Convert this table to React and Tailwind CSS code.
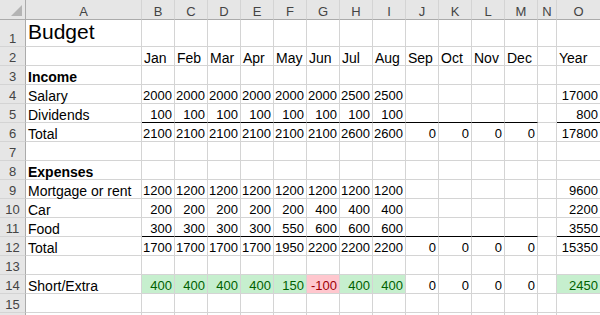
import React from "react";

const months = ["Jan", "Feb", "Mar", "Apr", "May", "Jun", "Jul", "Aug", "Sep", "Oct", "Nov", "Dec"];
const letters = ["A", "B", "C", "D", "E", "F", "G", "H", "I", "J", "K", "L", "M", "N", "O"];

const rows = [
  { n: 1, title: "Budget" },
  { n: 2, vals: months, text: true, o: "Year" },
  { n: 3, a: "Income", bold: true },
  { n: 4, a: "Salary", vals: [2000, 2000, 2000, 2000, 2000, 2000, 2500, 2500], o: 17000 },
  { n: 5, a: "Dividends", vals: [100, 100, 100, 100, 100, 100, 100, 100], o: 800, line: true },
  { n: 6, a: "Total", vals: [2100, 2100, 2100, 2100, 2100, 2100, 2600, 2600, 0, 0, 0, 0], o: 17800 },
  { n: 7 },
  { n: 8, a: "Expenses", bold: true },
  { n: 9, a: "Mortgage or rent", vals: [1200, 1200, 1200, 1200, 1200, 1200, 1200, 1200], o: 9600 },
  { n: 10, a: "Car", vals: [200, 200, 200, 200, 200, 400, 400, 400], o: 2200 },
  { n: 11, a: "Food", vals: [300, 300, 300, 300, 550, 600, 600, 600], o: 3550, line: true },
  { n: 12, a: "Total", vals: [1700, 1700, 1700, 1700, 1950, 2200, 2200, 2200, 0, 0, 0, 0], o: 15350 },
  { n: 13 },
  { n: 14, a: "Short/Extra", vals: [400, 400, 400, 400, 150, -100, 400, 400, 0, 0, 0, 0], o: 2450, fill: true },
  { n: 15 },
  { n: 16, hideNum: true }, // only its top edge shows
];

const Cell = ({ children, className = "" }) => (
  <div className={"flex items-end px-[2px] whitespace-nowrap border-r border-[#d4d4d4] " + className}>
    {children}
  </div>
);

// colour of a number cell in the Short/Extra row (only Jan..Aug are filled)
const fillOf = (row, i, v) => {
  if (!row.fill || v === "" || i >= 8) return "";
  return v < 0 ? "bg-[#ffc7ce] text-[#9c0006]" : "bg-[#c6efce] text-[#006100]";
};

const Row = ({ row }) => {
  const h = row.n === 1 ? "h-[27px]" : "h-[19px]";
  const bottom = (under) => (under ? "border-b border-b-black" : "border-b border-b-[#d4d4d4]");
  const numCls = row.text
    ? "justify-start text-[14px] leading-[14px]"
    : "justify-end text-[13px] leading-[14px]";

  return (
    <>
      <div className={`${h} flex items-end justify-center bg-[#e6e6e6] border-r border-r-[#ababab] border-b border-b-[#d4d4d4] text-[13px] leading-[15px] text-[#444]`}>
        {row.hideNum ? "" : row.n}
      </div>
      <Cell className={`${h} ${bottom(false)} ${row.title ? "pb-[2px] text-[21px] leading-[24px]" : "text-[14px] leading-[14px]"} ${row.bold ? "font-bold" : ""}`}>
        {row.title || row.a || ""}
      </Cell>
      {months.map((m, i) => {
        const v = row.vals && row.vals[i] !== undefined ? row.vals[i] : "";
        return (
          <Cell key={m} className={`${h} ${bottom(row.line)} ${numCls} ${fillOf(row, i, v)}`}>
            {v}
          </Cell>
        );
      })}
      <Cell className={`${h} ${bottom(false)}`} />
      <Cell
        className={`${h} ${bottom(row.line)} ${numCls} ${
          row.fill ? "bg-[#c6efce] text-[#006100]" : ""
        }`}
      >
        {row.o !== undefined ? row.o : ""}
      </Cell>
    </>
  );
};

export default function App() {
  return (
    <div className="w-[600px] h-[315px] overflow-hidden bg-white text-black font-['Liberation_Sans',Arial,sans-serif]">
      <div className="grid grid-cols-[26px_116px_repeat(12,33px)_19px_44px] w-max">
        <div className="h-[20px] flex items-end justify-end pr-[3px] pb-[3px] bg-[#e6e6e6] border-r border-r-[#ababab] border-b border-b-[#ababab]">
          <svg width="11" height="11" viewBox="0 0 11 11">
            <polygon points="11,0 11,11 0,11" fill="#b4b4b4" />
          </svg>
        </div>
        {letters.map((l) => (
          <div
            key={l}
            className="h-[20px] flex items-end justify-center bg-[#e6e6e6] border-r border-r-[#d4d4d4] border-b border-b-[#ababab] text-[13px] leading-[15px] text-[#444]"
          >
            {l}
          </div>
        ))}
        {rows.map((r) => (
          <Row key={r.n} row={r} />
        ))}
      </div>
    </div>
  );
}
